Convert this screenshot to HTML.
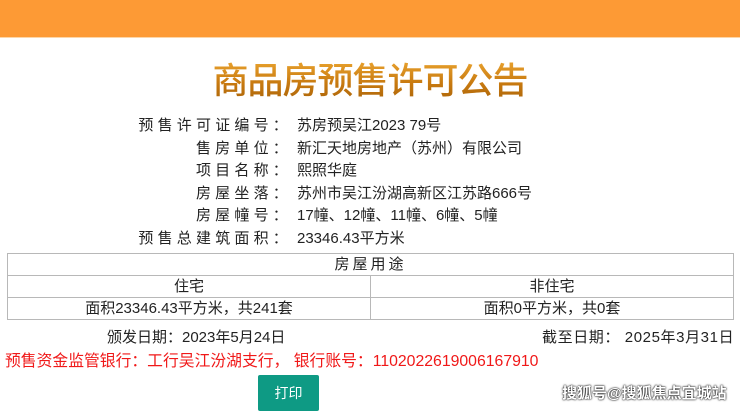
<!DOCTYPE html>
<html><head><meta charset="utf-8"><style>
body{margin:0;width:740px;height:412px;background:#fff;font-family:"Liberation Sans","Noto Sans CJK SC",sans-serif;color:#222;position:relative;overflow:hidden}
.bar{position:absolute;left:0;top:0;width:740px;height:37px;background:#fd9a35;border-bottom:1px solid #fdd6a8}
.title{position:absolute;top:52px;left:0;width:740px;text-align:center;font-family:"Noto Sans CJK SC",sans-serif;font-size:36px;font-weight:500;letter-spacing:-1px;color:#d88a10;background:linear-gradient(#f6b23a,#c87a10 60%,#a86208);-webkit-background-clip:text;background-clip:text;-webkit-text-fill-color:transparent}
.row{position:absolute;left:0;width:740px;font-size:15px;height:20px;line-height:20px}
.lab{position:absolute;left:0;width:292px;text-align:right;white-space:nowrap;letter-spacing:4.2px}
.val{position:absolute;left:297px;white-space:nowrap}
table{position:absolute;left:7px;top:253px;width:727px;border-collapse:collapse;font-size:15px}
td{border:1px solid #b8b8b8;text-align:center;height:21px;padding:0;line-height:21px}
.abs{position:absolute;font-size:15px;white-space:nowrap}
.btn{position:absolute;left:258px;top:375px;width:61px;height:36px;background:#0e9a84;color:#fff;font-size:14px;text-align:center;line-height:36px;border-radius:2px}
</style></head><body>
<div class="bar"></div>
<div class="title">商品房预售许可公告</div>
<div class="row" style="top:116px"><span class="lab">预售许可证编号：</span><span class="val">苏房预吴江2023 79号</span></div>
<div class="row" style="top:139px"><span class="lab">售房单位：</span><span class="val">新汇天地房地产（苏州）有限公司</span></div>
<div class="row" style="top:161px"><span class="lab">项目名称：</span><span class="val">熙照华庭</span></div>
<div class="row" style="top:184px"><span class="lab">房屋坐落：</span><span class="val">苏州市吴江汾湖高新区江苏路666号</span></div>
<div class="row" style="top:206px"><span class="lab">房屋幢号：</span><span class="val">17幢、12幢、11幢、6幢、5幢</span></div>
<div class="row" style="top:229px"><span class="lab">预售总建筑面积：</span><span class="val">23346.43平方米</span></div>
<table>
<tr><td colspan="2" style="letter-spacing:3px">房屋用途</td></tr>
<tr><td style="width:362px">住宅</td><td>非住宅</td></tr>
<tr><td>面积23346.43平方米，共241套</td><td>面积0平方米，共0套</td></tr>
</table>
<div class="abs" style="left:107px;top:326px">颁发日期：2023年5月24日</div>
<div class="abs" style="left:542px;top:326px;letter-spacing:0.6px">截至日期：&nbsp;2025年3月31日</div>
<div class="abs" style="left:5px;top:348px;color:#f01818;font-size:15.8px">预售资金监管银行：工行吴江汾湖支行，&nbsp;银行账号：1102022619006167910</div>
<div class="btn">打印</div>
<div class="abs" style="left:562px;top:382px;color:#fff;font-weight:bold;font-size:15px;text-shadow:0 0 2px #000,0 0 1px #000">搜狐号@搜狐焦点宜城站</div>
</body></html>
